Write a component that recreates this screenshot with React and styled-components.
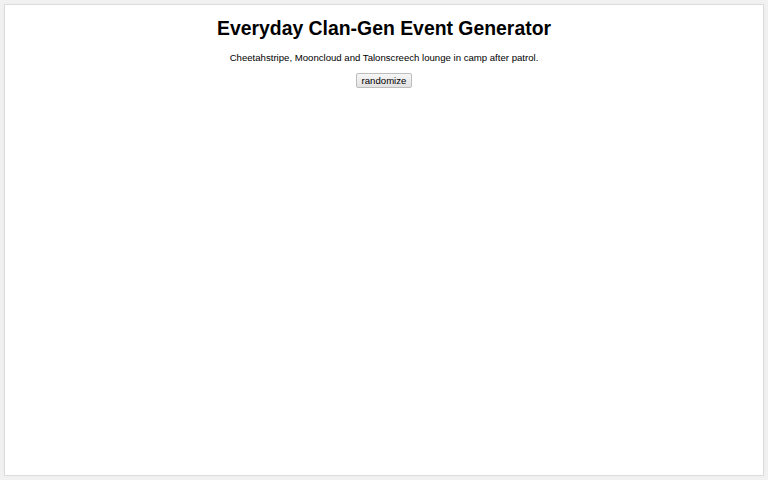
import React, {useState} from 'react';
import styled, {createGlobalStyle} from 'styled-components';

const GlobalStyle = createGlobalStyle`
    html, body {
        margin: 0;
        padding: 0;
        background: #f1f1f1;
        font-family: "Liberation Sans", Arial, sans-serif;
    }
`

const Page = styled.div`
    box-sizing: border-box;
    height: 480px;
    padding: 4px 4px 4px 4px;
`

const Card = styled.div`
    box-sizing: border-box;
    height: 472px;
    background: #fff;
    border: 1px solid #dcdcdc;
    box-shadow: 0 0 1px rgba(0, 0, 0, 0.08);
    display: flex;
    flex-direction: column;
    align-items: center;
`

const Title = styled.h1`
    margin: 12px 0 0;
    font-size: 19.4px;
    font-weight: bold;
    color: #000;
`

const EventText = styled.p`
    margin: 12px 0 0;
    font-size: 9.6px;
    color: #000;
`

const Button = styled.button`
    margin-top: 10px;
    height: 15px;
    padding: 0 5px;
    font-family: "Liberation Sans", Arial, sans-serif;
    font-size: 9.6px;
    color: #000;
    background: linear-gradient(#f6f6f6, #e2e2e2);
    border: 1px solid #bdbdbd;
    border-radius: 2px;
    line-height: 13px;
`

const cats = ['Cheetahstripe', 'Mooncloud', 'Talonscreech', 'Ashfur', 'Fernpaw', 'Stormheart'];
const events = ['lounge in camp after patrol.', 'share tongues by the fresh-kill pile.', 'go hunting near the river.'];

const App = () => {
    const [line, setLine] = useState('Cheetahstripe, Mooncloud and Talonscreech lounge in camp after patrol.');

    const randomize = () => {
        const pick = [...cats].sort(() => Math.random() - 0.5).slice(0, 3);
        const ev = events[Math.floor(Math.random() * events.length)];
        setLine(`${pick[0]}, ${pick[1]} and ${pick[2]} ${ev}`);
    }

    return (
        <Page>
            <GlobalStyle />
            <Card>
                <Title>Everyday Clan-Gen Event Generator</Title>
                <EventText>{line}</EventText>
                <Button onClick={randomize}>randomize</Button>
            </Card>
        </Page>
    )
}

export default App;
